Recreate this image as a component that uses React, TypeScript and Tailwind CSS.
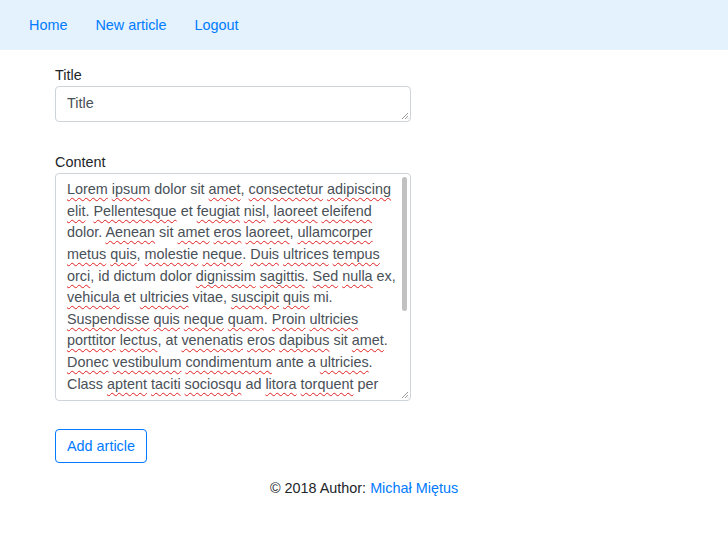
import type { ReactNode } from "react";

const FONT = { fontFamily: '"Liberation Sans", Arial, sans-serif' };

// words marked by the spell checker in the content field
const LINES: string[][] = [
  ["~Lorem", "~ipsum", "dolor", "sit", "~amet,", "~consectetur", "~adipiscing"],
  ["~elit.", "~Pellentesque", "et", "~feugiat", "~nisl,", "~laoreet", "~eleifend"],
  ["dolor.", "~Aenean", "sit", "~amet", "~eros", "~laoreet,", "~ullamcorper"],
  ["~metus", "~quis,", "~molestie", "~neque.", "~Duis", "~ultrices", "~tempus"],
  ["~orci,", "id", "dictum", "dolor", "~dignissim", "~sagittis.", "~Sed", "~nulla", "ex,"],
  ["~vehicula", "et", "~ultricies", "vitae,", "~suscipit", "~quis", "mi."],
  ["~Suspendisse", "~quis", "~neque", "~quam.", "~Proin", "~ultricies"],
  ["~porttitor", "~lectus,", "at", "~venenatis", "~eros", "~dapibus", "sit", "~amet."],
  ["~Donec", "~vestibulum", "~condimentum", "ante", "a", "~ultricies."],
  ["Class", "~aptent", "~taciti", "~sociosqu", "ad", "~litora", "~torquent", "per"],
];

function Word({ raw }: { raw: string }) {
  if (!raw.startsWith("~")) return <span>{raw}</span>;
  const text = raw.slice(1);
  const m = text.match(/^(.*?)([.,]?)$/);
  const word = m ? m[1] : text;
  const punct = m ? m[2] : "";
  return (
    <span>
      <span className="underline decoration-wavy decoration-[#e02020] decoration-1 underline-offset-[3px]">
        {word}
      </span>
      {punct}
    </span>
  );
}

function ResizeGrip() {
  return (
    <svg
      className="pointer-events-none absolute right-[1px] bottom-[1px]"
      width="8"
      height="8"
      viewBox="0 0 8 8"
    >
      <path d="M7 1 L1 7 M7 4 L4 7 M7 6.5 L6.5 7" stroke="#9a9a9a" strokeWidth="1" />
    </svg>
  );
}

function NavLink({ children }: { children: ReactNode }) {
  return <span className="px-[14px] text-[#007bff]">{children}</span>;
}

export default function App() {
  return (
    <div className="min-h-[540px] bg-white text-[14.4px] leading-[21.6px] text-[#212529]" style={FONT}>
      <nav className="flex h-[50px] items-center bg-[#e3f2fd] pl-[15px] pt-[2px]">
        <NavLink>Home</NavLink>
        <NavLink>New article</NavLink>
        <NavLink>Logout</NavLink>
      </nav>

      <div className="ml-[55px] w-[356px]">
        <div className="mt-[15px] mb-[-1px]">Title</div>
        <div className="relative h-[36px] rounded border border-[#ced4da] px-[11px] pt-[6px] text-[#495057]">
          Title
          <ResizeGrip />
        </div>

        <div className="mt-[30px]">Content</div>
        <div className="relative h-[228px] overflow-hidden rounded border border-[#ced4da] pl-[11px] pt-[5px] text-[#495057]">
          {LINES.map((line, i) => (
            <div key={i} className="whitespace-nowrap">
              {line.map((w, j) => (
                <span key={j}>
                  {j > 0 && " "}
                  <Word raw={w} />
                </span>
              ))}
            </div>
          ))}
          <div className="absolute top-[3px] right-[3px] h-[134px] w-[5px] rounded-full bg-[#c1c1c1]" />
          <ResizeGrip />
        </div>

        <button
          type="button"
          className="mt-[28px] h-[34px] rounded border border-[#007bff] px-[11px] pt-[2px] text-[#007bff]"
        >
          Add article
        </button>
      </div>

      <div className="mt-[15px] text-center">
        © 2018 Author: <span className="text-[#007bff]">Michał Miętus</span>
      </div>
    </div>
  );
}
